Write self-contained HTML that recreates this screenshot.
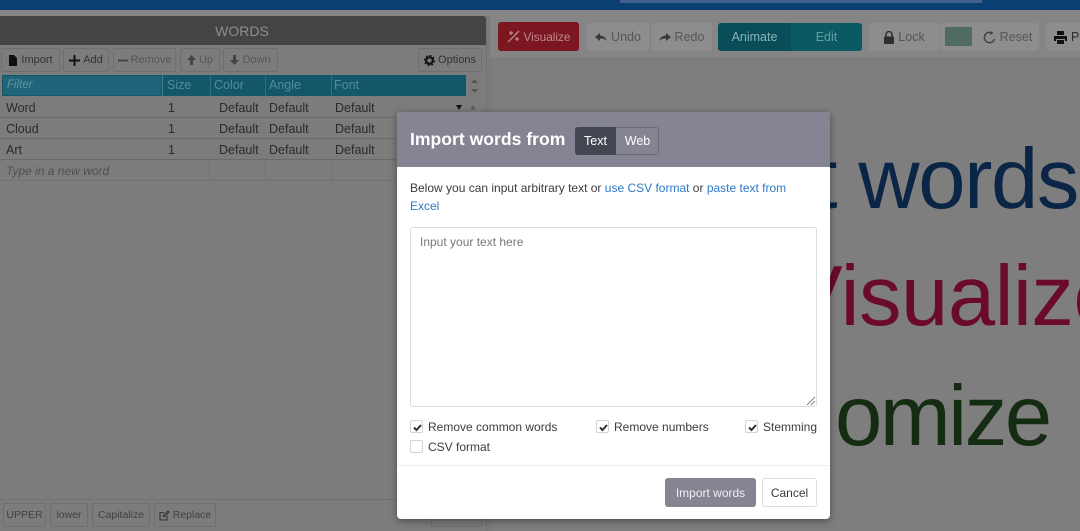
<!DOCTYPE html>
<html><head><meta charset="utf-8"><style>
html,body{margin:0;padding:0}
body{width:1080px;height:531px;overflow:hidden;position:relative;background:#7c7c7c;font-family:"Liberation Sans",sans-serif;font-size:12px;color:#2e2e2e}
.a{position:absolute;white-space:nowrap}
.b{position:absolute;box-sizing:border-box;border:1px solid #6f6f6f;border-radius:2px;background:#7c7c7c;display:flex;align-items:center;justify-content:center;gap:3px;white-space:nowrap;font-size:11px;color:#333}
.d{color:#555}
.r{position:absolute;box-sizing:border-box;background:#8d8d8d;border-radius:3px;display:flex;align-items:center;justify-content:center;gap:4px;font-size:12.5px;color:#565656}
.c{position:absolute;font-size:12.5px;color:#2a2a2a;white-space:nowrap}
.big{position:absolute;font-size:85px;line-height:100px;white-space:nowrap}
.cb{position:absolute;box-sizing:border-box;width:13px;height:13px;border:1px solid #d4d4d4;border-radius:2px;background:#fff}
.cb svg{position:absolute;left:1px;top:1px}
.l{position:absolute;height:1px;background:#6a6a6a}
.t{position:absolute;font-size:12px;color:#3c3c3c;white-space:nowrap}
a{color:#2f78c8;text-decoration:none}
</style></head><body>
<div class="a" style="left:0;top:0;width:1080px;height:10px;background:#0a3f72"></div>
<div class="a" style="left:620px;top:0;width:362px;height:3px;background:#41608a"></div>
<div class="a" style="left:0;top:10px;width:1080px;height:6px;background:#868686"></div>

<div class="a" style="left:0;top:16px;width:486px;height:29px;background:#444;border-radius:0 3px 0 0;color:#8e8e8e;font-size:14px;line-height:30px;text-align:center;padding-right:2px;box-sizing:border-box">WORDS</div>
<div class="a" style="left:486px;top:16px;width:1px;height:515px;background:#727272"></div>

<div class="b" style="left:1px;top:48px;width:59px;height:24px"><svg width="10" height="11" viewBox="0 0 10 11"><path d="M1 0h5l3 3v8H1z" fill="#111"/></svg><span>Import</span></div>
<div class="b" style="left:63px;top:48px;width:46px;height:24px"><svg width="11" height="11" viewBox="0 0 11 11"><path d="M4.500 0h2v4.500H11v2H6.500V11h-2V6.500H0v-2h4.500z" fill="#111"/></svg><span>Add</span></div>
<div class="b d" style="left:113px;top:48px;width:63px;height:24px"><svg width="10" height="3" viewBox="0 0 10 3"><rect width="10" height="2" y=".5" fill="#444"/></svg><span>Remove</span></div>
<div class="b d" style="left:180px;top:48px;width:40px;height:24px"><svg width="9" height="10" viewBox="0 0 9 10"><path d="M4.500 0L9 5H6v5H3V5H0z" fill="#444"/></svg><span>Up</span></div>
<div class="b d" style="left:223px;top:48px;width:55px;height:24px"><svg width="9" height="10" viewBox="0 0 9 10"><path d="M4.500 10L9 5H6V0H3v5H0z" fill="#444"/></svg><span>Down</span></div>
<div class="b" style="left:418px;top:48px;width:64px;height:24px"><svg width="11" height="11" viewBox="0 0 11 11"><circle cx="5.500" cy="5.500" r="3.300" fill="none" stroke="#111" stroke-width="2.200"/><circle cx="5.500" cy="5.500" r="5" fill="none" stroke="#111" stroke-width="1.200" stroke-dasharray="2 1.900"/></svg><span>Options</span></div>

<div class="a" style="left:2px;top:75px;width:464px;height:21px;background:#14566a"></div>
<div class="a" style="left:3px;top:76px;width:158px;height:19px;background:#20647a"></div>
<div class="a" style="left:7px;top:79px;font-size:11.500px;font-style:italic;color:#5f95a5">Filter</div>
<div class="a" style="left:167px;top:78px;font-size:12.500px;color:#528d9e">Size</div>
<div class="a" style="left:214px;top:78px;font-size:12.500px;color:#528d9e">Color</div>
<div class="a" style="left:269px;top:78px;font-size:12.500px;color:#528d9e">Angle</div>
<div class="a" style="left:334px;top:78px;font-size:12.500px;color:#528d9e">Font</div>
<div class="a" style="left:162px;top:75px;width:1px;height:21px;background:#3f8093"></div>
<div class="a" style="left:210px;top:75px;width:1px;height:21px;background:#2a7085"></div>
<div class="a" style="left:265px;top:75px;width:1px;height:21px;background:#2a7085"></div>
<div class="a" style="left:331px;top:75px;width:1px;height:21px;background:#2a7085"></div>
<svg class="a" style="left:470px;top:78px" width="9" height="16" viewBox="0 0 9 16"><path d="M1 5l3.500-4L8 5zM1 11l3.500 4L8 11z" fill="#555"/></svg>
<svg class="a" style="left:455px;top:104px" width="22" height="7" viewBox="0 0 22 7"><path d="M1 1h6L4 6z" fill="#111"/><path d="M15 5.500h6L18 1z" fill="#5e5e5e"/></svg>

<div class="c" style="left:6px;top:101px">Word</div><div class="c" style="left:168px;top:101px">1</div><div class="c" style="left:219px;top:101px">Default</div><div class="c" style="left:269px;top:101px">Default</div><div class="c" style="left:335px;top:101px">Default</div>
<div class="l" style="left:0;top:117px;width:396px"></div>
<div class="c" style="left:6px;top:122px">Cloud</div><div class="c" style="left:168px;top:122px">1</div><div class="c" style="left:219px;top:122px">Default</div><div class="c" style="left:269px;top:122px">Default</div><div class="c" style="left:335px;top:122px">Default</div>
<div class="l" style="left:0;top:138px;width:396px"></div>
<div class="c" style="left:6px;top:143px">Art</div><div class="c" style="left:168px;top:143px">1</div><div class="c" style="left:219px;top:143px">Default</div><div class="c" style="left:269px;top:143px">Default</div><div class="c" style="left:335px;top:143px">Default</div>
<div class="l" style="left:0;top:159px;width:396px"></div>
<div class="c" style="left:6px;top:164px;font-style:italic;color:#505050;font-size:12px">Type in a new word</div>
<div class="l" style="left:0;top:180px;width:396px;background:#727272"></div>
<div class="a" style="left:209px;top:160px;width:1px;height:20px;background:#727272"></div>
<div class="a" style="left:265px;top:160px;width:1px;height:20px;background:#727272"></div>
<div class="a" style="left:331px;top:160px;width:1px;height:20px;background:#727272"></div>

<div class="l" style="left:0;top:499px;width:486px;background:#717171"></div>
<div class="b" style="left:3px;top:503px;width:43px;height:24px;color:#414141;font-size:10.500px">UPPER</div>
<div class="b" style="left:50px;top:503px;width:38px;height:24px;color:#414141;font-size:10.500px">lower</div>
<div class="b" style="left:92px;top:503px;width:58px;height:24px;color:#414141;font-size:10.500px">Capitalize</div>
<div class="b" style="left:154px;top:503px;width:62px;height:24px;color:#414141;font-size:10.500px"><svg width="11" height="11" viewBox="0 0 11 11"><path d="M8 6v4H1V2.500h4M4.500 6.500L4.800 5 9 1l1 1-4 4.200z" fill="none" stroke="#333" stroke-width="1.100"/></svg><span>Replace</span></div>
<div class="b" style="left:431px;top:505px;width:51px;height:22px"></div>

<div class="a" style="left:490px;top:16px;width:590px;height:41px;background:#858585"></div>
<div class="a" style="left:493px;top:57px;width:587px;height:474px;background:#7e7e7e"></div>
<div class="r" style="left:498px;top:22px;width:81px;height:29px;background:#7c1620;color:#bb8a8f;font-size:11.800px"><svg width="13" height="13" viewBox="0 0 13 13"><path d="M1 12L12 1M2 3h4M4 1v4M8 9h4M10 7v4" stroke="#bb8a8f" stroke-width="1.300" fill="none"/></svg><span>Visualize</span></div>
<div class="r" style="left:586px;top:23px;width:64px;height:28px"><svg width="12" height="9" viewBox="0 0 12 9"><path d="M5 0L0 4l5 4V5.500c3 0 5 .5 7 2.500-1-3-3-5-7-5.500z" fill="#3a3a3a"/></svg><span>Undo</span></div>
<div class="r" style="left:650px;top:23px;width:62px;height:28px;border-left:1px solid #7f7f7f"><svg width="12" height="9" viewBox="0 0 12 9"><path d="M7 0l5 4-5 4V5.500c-3 0-5 .5-7 2.500 1-3 3-5 7-5.500z" fill="#3a3a3a"/></svg><span>Redo</span></div>
<div class="r" style="left:718px;top:23px;width:73px;height:28px;background:#094d58;color:#8ab3b9;border-radius:3px 0 0 3px">Animate</div>
<div class="r" style="left:791px;top:23px;width:71px;height:28px;background:#0b5a63;color:#659fa6;border-radius:0 3px 3px 0">Edit</div>
<div class="r" style="left:869px;top:23px;width:71px;height:28px"><svg width="10" height="13" viewBox="0 0 10 13"><path d="M2 6V3.500a3 3 0 0 1 6 0V6" fill="none" stroke="#2e2e2e" stroke-width="1.500"/><rect y="5.500" width="10" height="7.500" rx="1" fill="#2e2e2e"/></svg><span>Lock</span></div>
<div class="r" style="left:941px;top:23px;width:35px;height:28px"></div>
<div class="a" style="left:945px;top:27px;width:27px;height:19px;background:#4f6b63"></div>
<div class="r" style="left:976px;top:23px;width:63px;height:28px"><svg width="13" height="13" viewBox="0 0 13 13"><path d="M8 1.500A5.200 5.200 0 1 0 11.500 8" fill="none" stroke="#404040" stroke-width="1.400"/><path d="M7 0l3.500 2L7 4z" fill="#404040"/></svg><span>Reset</span></div>
<div class="r" style="left:1046px;top:23px;width:50px;height:28px;justify-content:flex-start;padding-left:8px;color:#2e2e2e"><svg width="13" height="13" viewBox="0 0 13 13"><path d="M3 0h7v4H3zM0 5h13v5h-2V8H2v2H0zM3 9h7v4H3z" fill="#111"/></svg><span>Pr</span></div>

<div class="big" style="left:785px;top:130px;color:#0a2545;width:293px;text-align:right;letter-spacing:-1.400px">t words</div>
<div class="big" style="left:786px;top:247px;color:#6a0b2e;letter-spacing:-.5px">Visualize</div>
<div class="big" style="left:835px;top:367px;color:#142d12;letter-spacing:-2.400px">omize</div>

<div class="a" style="left:397px;top:112px;width:433px;height:407px;background:#fff;border-radius:4px;box-shadow:0 2px 8px rgba(0,0,0,.4);overflow:hidden">
  <div class="a" style="left:0;top:0;width:433px;height:55px;background:#858493"></div>
</div>
<div class="a" style="left:410px;top:128px;font-size:17.600px;font-weight:bold;color:#fff;line-height:22px">Import words from</div>
<div class="a" style="left:575px;top:127px;width:84px;height:28px;box-sizing:border-box;border:1px solid #6a6977;border-radius:3px;background:#858493"></div>
<div class="a" style="left:575px;top:127px;width:41px;height:28px;background:#434650;border-radius:3px 0 0 3px;color:#fff;font-size:12.500px;line-height:29px;text-align:center">Text</div>
<div class="a" style="left:617px;top:127px;width:41px;height:28px;color:#fff;font-size:12.500px;line-height:29px;text-align:center">Web</div>
<div class="t" style="left:410px;top:181px">Below you can input arbitrary text or <a href="#">use CSV format</a> or <a href="#">paste text from</a></div>
<div class="t" style="left:410px;top:199px"><a href="#">Excel</a></div>
<div class="a" style="left:410px;top:227px;width:407px;height:180px;box-sizing:border-box;border:1px solid #dcdcdc;border-radius:3px;background:#fff;color:#777;font-size:12px;padding:7px 9px">Input your text here</div>
<svg class="a" style="left:806px;top:396px" width="10" height="10" viewBox="0 0 10 10"><path d="M1 9l8-8M5 9l4-4" stroke="#888" stroke-width="1"/></svg>

<div class="cb" style="left:410px;top:420px"><svg width="11" height="11" viewBox="0 0 11 11"><path d="M2 5.500l2.500 2.500L9 3" fill="none" stroke="#333" stroke-width="2"/></svg></div>
<div class="t" style="left:428px;top:420px">Remove common words</div>
<div class="cb" style="left:596px;top:420px"><svg width="11" height="11" viewBox="0 0 11 11"><path d="M2 5.500l2.500 2.500L9 3" fill="none" stroke="#333" stroke-width="2"/></svg></div>
<div class="t" style="left:614px;top:420px">Remove numbers</div>
<div class="cb" style="left:745px;top:420px"><svg width="11" height="11" viewBox="0 0 11 11"><path d="M2 5.500l2.500 2.500L9 3" fill="none" stroke="#333" stroke-width="2"/></svg></div>
<div class="t" style="left:763px;top:420px">Stemming</div>
<div class="cb" style="left:410px;top:440px"></div>
<div class="t" style="left:428px;top:440px">CSV format</div>

<div class="a" style="left:397px;top:465px;width:433px;height:1px;background:#eee"></div>
<div class="a" style="left:665px;top:478px;width:91px;height:29px;background:#858493;border-radius:3px;color:#f0f0f3;font-size:12px;line-height:30px;text-align:center">Import words</div>
<div class="a" style="left:762px;top:478px;width:55px;height:29px;box-sizing:border-box;border:1px solid #ddd;border-radius:3px;background:#fff;color:#3c3c3c;font-size:12px;line-height:28px;text-align:center">Cancel</div>
</body></html>
